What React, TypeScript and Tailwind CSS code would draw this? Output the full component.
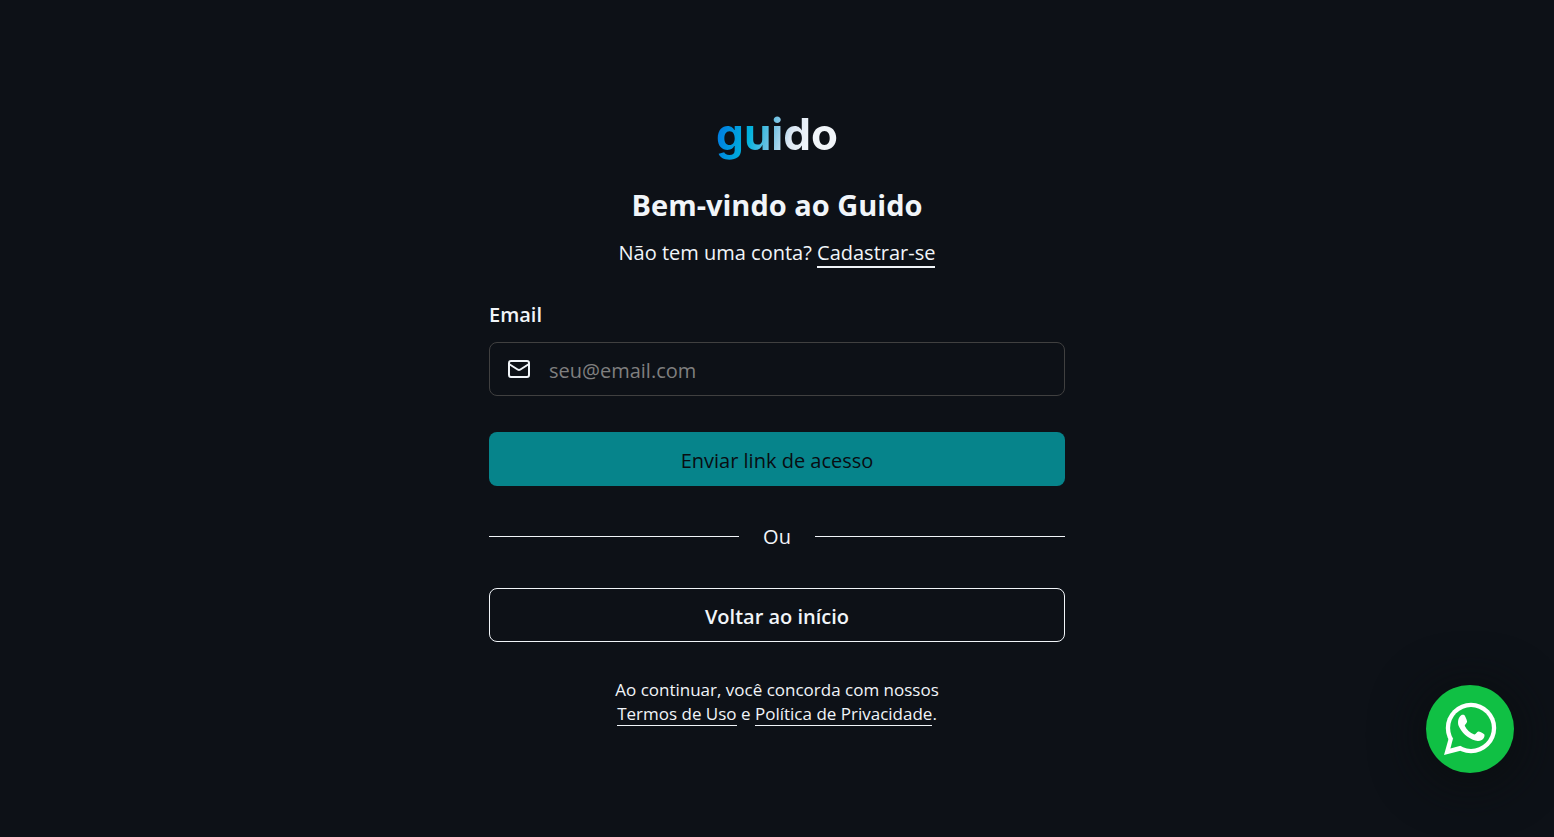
import { Mail } from "lucide-react";

function WhatsAppIcon() {
  return (
    <svg viewBox="0 1 60 60" className="size-[60px]" aria-hidden="true">
      <circle cx="31" cy="30" r="25.2" fill="#fff" />
      <path d="M8.5 41 L4 57 L20.500 52.700 L26 40 L14 34 Z" fill="#fff" />
      <circle cx="31" cy="30" r="20.900" fill="#10c044" />
      <path d="M13 40.500 L10.400 50.500 L20.500 47.800 L24 40 Z" fill="#10c044" />
      <path
        d="M21.200 17.200c.9-.5 2.500-.5 3.300.1.800.9 2.400 4.800 2.600 6.200.1 1.300-2.300 3-2.400 4.200 1.800 3.800 5.200 7 9.600 8.900 1.500.2 2.700-2.900 4-3 1.300-.1 4.900 1.900 6.100 2.900.6 1.800-.7 4.600-2.600 5.600-2 1-4.200 1.200-6.600.5-8-2.500-13.700-8.200-16.500-14.500-1.300-3.700-.7-8.600 2.500-10.900z"
        fill="#fff"
      />
    </svg>
  );
}

export default function App() {
  return (
    <main className="flex min-h-screen flex-col items-center justify-center bg-[#0d1117] px-4 pb-2 font-['Open_Sans','Noto_Sans',sans-serif] text-[20px] leading-[30px] text-[#f1f5f9]">
      <div className="flex w-full max-w-[576px] flex-col">
        <div className="self-center bg-[linear-gradient(105deg,#0080e0_8%,#00b2dc_30%,#7cc4e4_48%,#dce8f4_60%,#f1f5f9_75%)] bg-clip-text font-['Inter',sans-serif] text-[44px] leading-[60px] font-bold text-transparent">
          guido
        </div>
        <h1 className="mt-5 text-center text-[29px] leading-[42px] font-bold">Bem-vindo ao Guido</h1>
        <p className="mt-3 text-center">
          Não tem uma conta?{" "}
          <a href="#cadastro" className="border-b-2 border-[#f1f5f9]">Cadastrar-se</a>
        </p>
        <form className="mt-8 flex flex-col" onSubmit={(e) => e.preventDefault()}>
          <label htmlFor="email" className="font-semibold">Email</label>
          <div className="mt-3 flex h-[54px] items-center gap-[18px] rounded-lg border border-[#404040] px-[17px]">
            <Mail className="size-6 shrink-0" />
            <input
              id="email"
              type="email"
              placeholder="seu@email.com"
              className="min-w-0 flex-1 bg-transparent pt-1 outline-none placeholder:text-[#7f7f7f]"
            />
          </div>
          <button type="submit" className="mt-9 h-[54px] rounded-lg bg-[#06848b] pt-1 font-medium text-[#090d12]">
            Enviar link de acesso
          </button>
        </form>
        <div className="mt-9 flex items-center gap-6">
          <span className="h-px flex-1 bg-[#f1f5f9]" />
          <span>Ou</span>
          <span className="h-px flex-1 bg-[#f1f5f9]" />
        </div>
        <button type="button" className="mt-9 h-[54px] rounded-lg border border-[#f1f5f9] pt-1 font-semibold">
          Voltar ao início
        </button>
        <p className="mt-9 text-center text-[17px] leading-6">
          Ao continuar, você concorda com nossos
          <br />
          <a href="#termos" className="border-b border-[#f1f5f9]">Termos de Uso</a> e{" "}
          <a href="#privacidade" className="border-b border-[#f1f5f9]">Política de Privacidade</a>.
        </p>
      </div>
      <a
        href="#whatsapp"
        aria-label="WhatsApp"
        className="fixed right-10 bottom-16 flex size-[88px] items-center justify-center rounded-full bg-[#10c044] shadow-[0_6px_48px_6px_rgba(10,14,15,0.8)]"
      >
        <WhatsAppIcon />
      </a>
    </main>
  );
}
